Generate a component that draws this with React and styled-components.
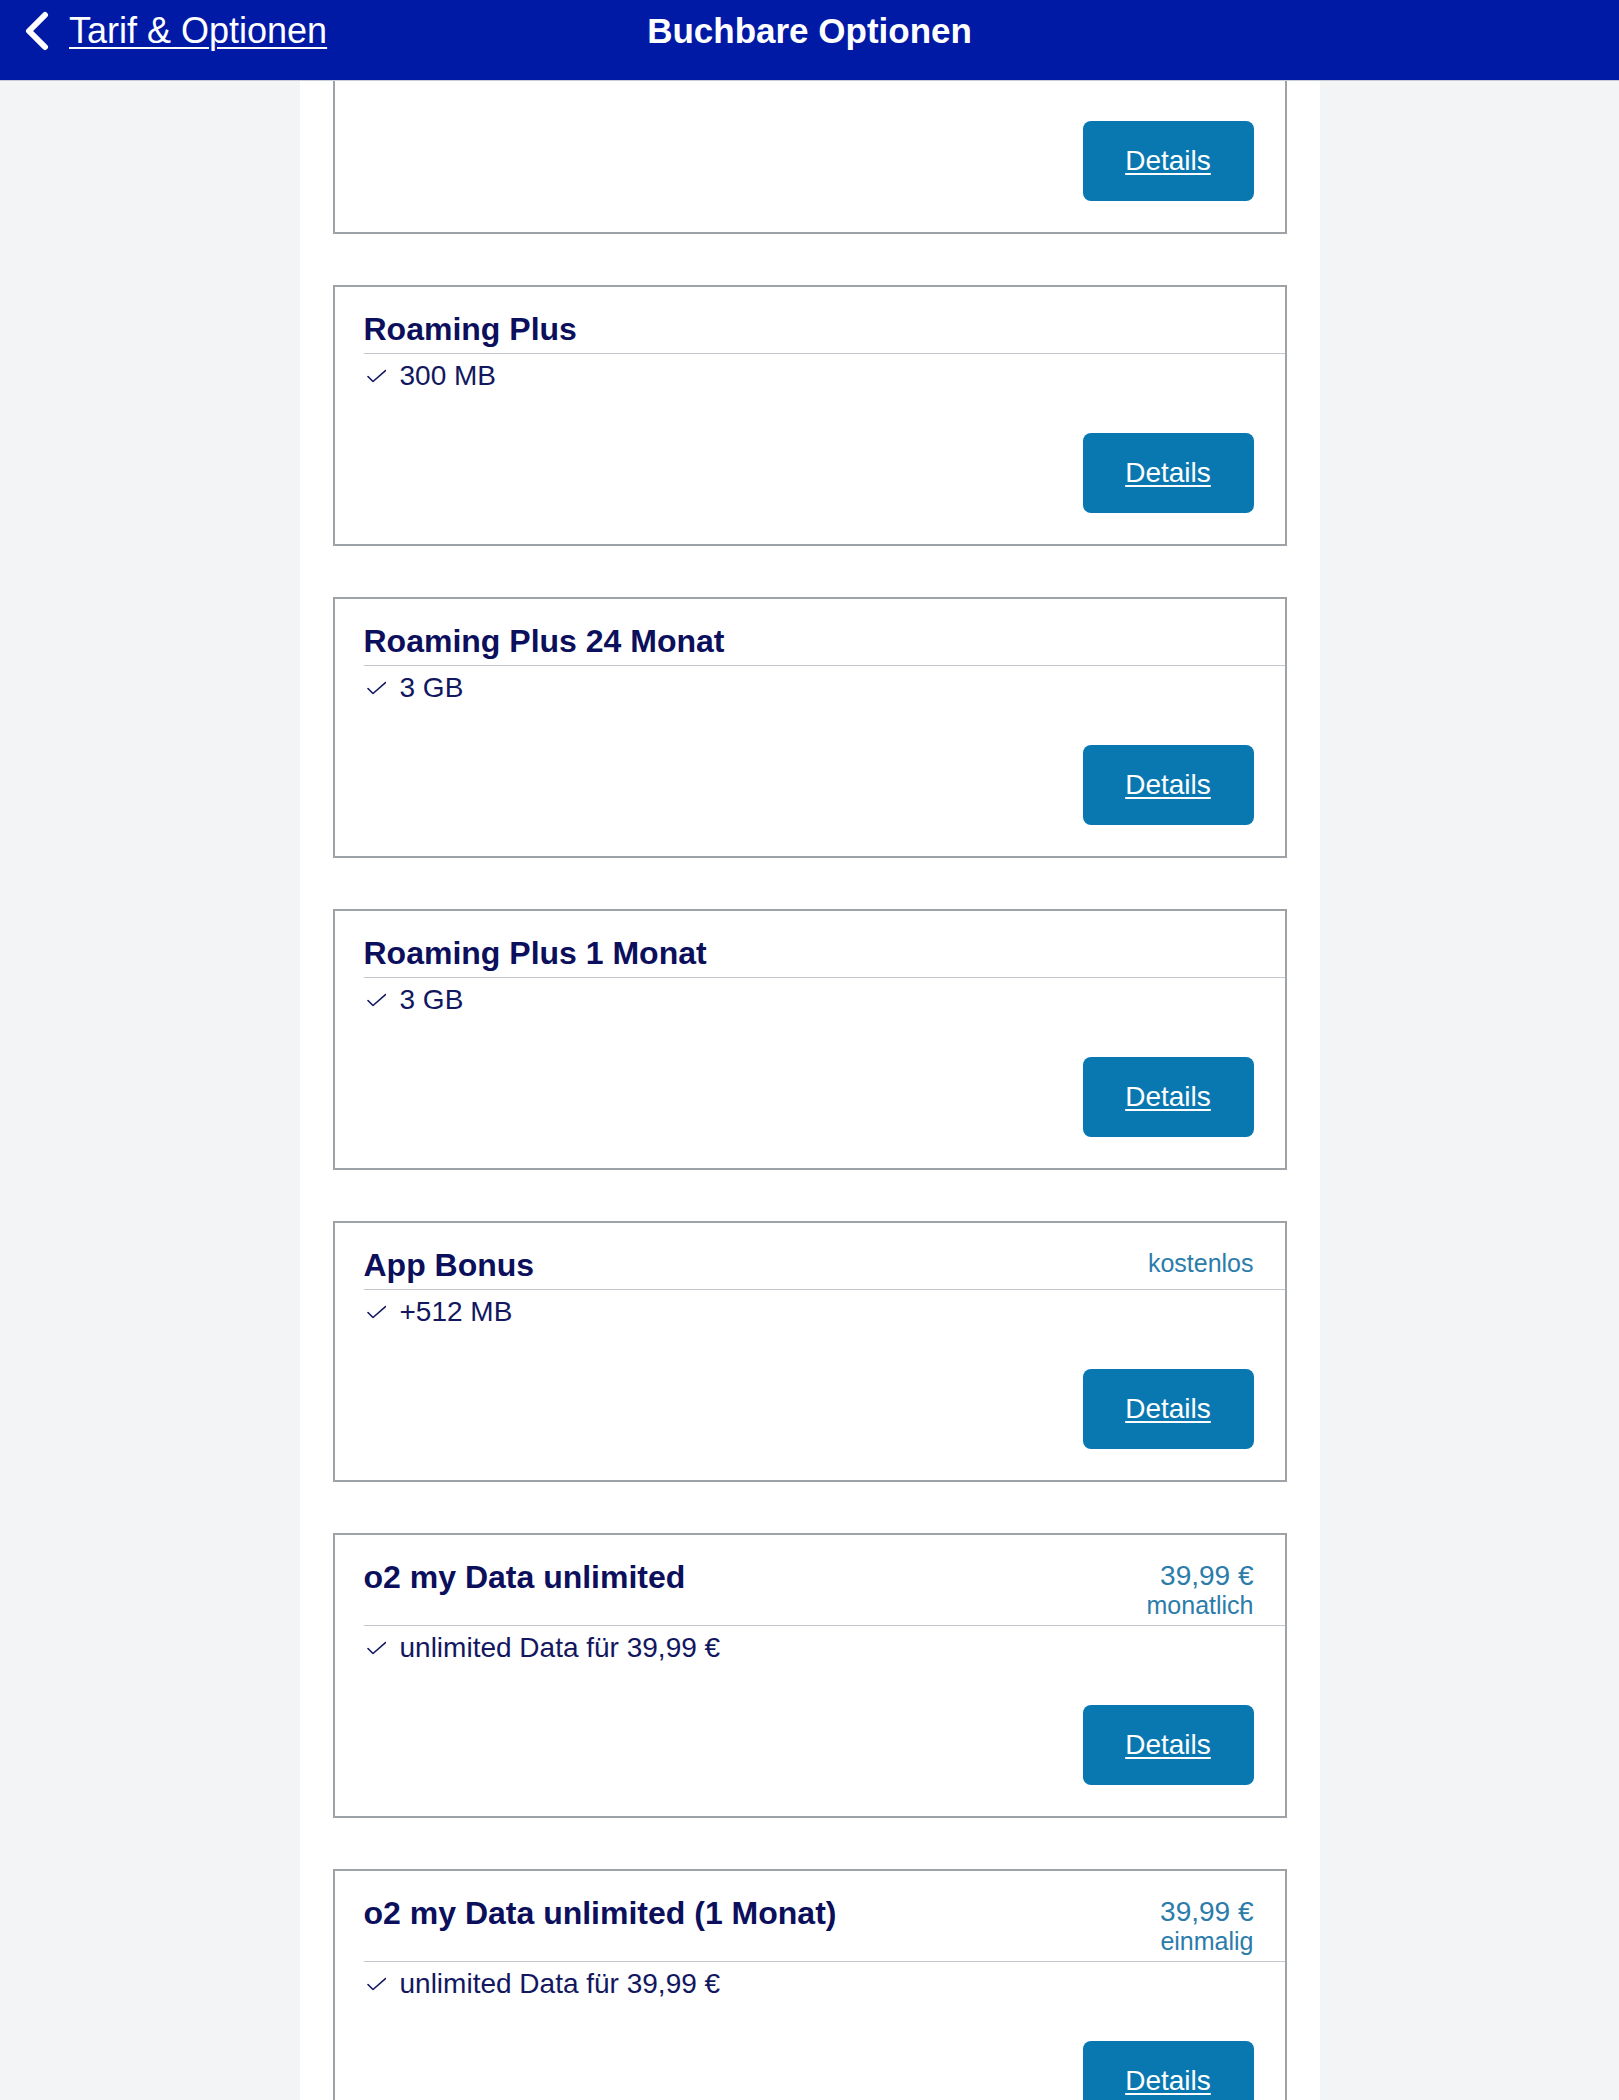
import styled, { createGlobalStyle } from "styled-components";

const GlobalStyle = createGlobalStyle`
  html, body {
    margin: 0;
    padding: 0;
    background: #f3f4f6;
    font-family: "Liberation Sans", Arial, sans-serif;
  }
`;

const TopBar = styled.header`
  height: 81px;
  background: #001aa6;
  display: grid;
  grid-template-columns: 1fr auto 1fr;
  align-items: flex-start;
  padding-top: 11px;
  box-sizing: border-box;
  border-bottom: 1px solid #c8cdd8;
`;

const BackLink = styled.a`
  display: flex;
  align-items: center;
  gap: 19px;
  padding-left: 24px;
  height: 40px;
  color: #ffffff;
  font-size: 36px;
  line-height: 40px;
  text-decoration: underline;
  text-decoration-thickness: 2px;
  text-underline-offset: 4px;
  cursor: pointer;
`;

const PageTitle = styled.h1`
  margin: 0;
  color: #ffffff;
  font-size: 35px;
  line-height: 40px;
  font-weight: 700;
`;

const Column = styled.main`
  width: 1020px;
  margin: 0 auto;
  background: #ffffff;
  min-height: 2020px;
  padding: 0 33px 60px;
  box-sizing: border-box;
  display: flex;
  flex-direction: column;
  gap: 51px;
`;

const Card = styled.section`
  border: 2px solid #9ea3a8;
  border-top: ${(p) => (p.$cut ? "none" : "2px solid #9ea3a8")};
  padding-left: 29px;
  padding-top: ${(p) => (p.$cut ? "40px" : "0")};
  background: #ffffff;
`;

const CardHead = styled.div`
  display: flex;
  justify-content: space-between;
  align-items: flex-start;
  padding: 25px 31px 6px 0;
  border-bottom: 1px solid #c4c8cc;
`;

const CardTitle = styled.h2`
  margin: 0;
  font-size: 32px;
  line-height: 35px;
  font-weight: 700;
  color: #0b0f5c;
`;

const Price = styled.div`
  text-align: right;
  color: #2b7caa;
`;

const PriceMain = styled.div`
  font-size: ${(p) => (p.$small ? "25px" : "28px")};
  line-height: 31px;
`;

const PriceSub = styled.div`
  font-size: 25px;
  line-height: 28px;
`;

const Feature = styled.div`
  display: flex;
  align-items: center;
  padding-top: 5px;
  height: 34px;
  font-size: 28px;
  line-height: 34px;
  color: #121760;
`;

const Check = styled.svg`
  width: 22px;
  height: 14px;
  margin-right: 14px;
  flex-shrink: 0;
`;

const CardFoot = styled.div`
  display: flex;
  justify-content: flex-end;
  padding: ${(p) => (p.$cut ? "0" : "40px")} 31px 31px 0;
`;

const DetailsButton = styled.button`
  width: 171px;
  height: 80px;
  border: none;
  border-radius: 8px;
  background: #0a78b0;
  color: #ffffff;
  font-family: inherit;
  font-size: 28px;
  text-decoration: underline;
  text-underline-offset: 3px;
  cursor: pointer;
`;

const options = [
  { title: "Roaming Plus", feature: "300 MB" },
  { title: "Roaming Plus 24 Monat", feature: "3 GB" },
  { title: "Roaming Plus 1 Monat", feature: "3 GB" },
  { title: "App Bonus", feature: "+512 MB", price: "kostenlos" },
  {
    title: "o2 my Data unlimited",
    feature: "unlimited Data für 39,99 €",
    price: "39,99 €",
    period: "monatlich",
  },
  {
    title: "o2 my Data unlimited (1 Monat)",
    feature: "unlimited Data für 39,99 €",
    price: "39,99 €",
    period: "einmalig",
  },
];

const Chevron = () => (
  <svg width="26" height="40" viewBox="0 0 26 40">
    <path
      d="M21 4 L5 20 L21 36"
      fill="none"
      stroke="#ffffff"
      strokeWidth="6"
      strokeLinecap="round"
      strokeLinejoin="round"
    />
  </svg>
);

const OptionCard = ({ title, feature, price, period }) => (
  <Card>
    <CardHead>
      <CardTitle>{title}</CardTitle>
      {price && (
        <Price>
          <PriceMain $small={!period}>{price}</PriceMain>
          {period && <PriceSub>{period}</PriceSub>}
        </Price>
      )}
    </CardHead>
    <Feature>
      <Check viewBox="0 0 22 14">
        <path
          d="M4 7.5 L9 12.5 L21.5 1.5"
          fill="none"
          stroke="#121760"
          strokeWidth="1.6"
          strokeLinecap="round"
          strokeLinejoin="round"
        />
      </Check>
      {feature}
    </Feature>
    <CardFoot>
      <DetailsButton>Details</DetailsButton>
    </CardFoot>
  </Card>
);

export default function App() {
  return (
    <>
      <GlobalStyle />
      <TopBar>
        <BackLink>
          <Chevron />
          Tarif &amp; Optionen
        </BackLink>
        <PageTitle>Buchbare Optionen</PageTitle>
        <div />
      </TopBar>
      <Column>
        <Card $cut>
          <CardFoot $cut>
            <DetailsButton>Details</DetailsButton>
          </CardFoot>
        </Card>
        {options.map((o) => (
          <OptionCard key={o.title} {...o} />
        ))}
      </Column>
    </>
  );
}
